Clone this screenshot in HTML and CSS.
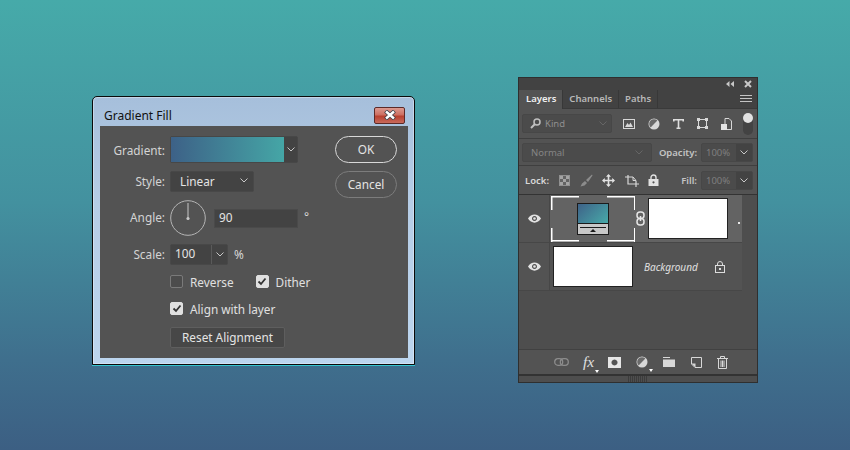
FILE: index.html
```html
<!DOCTYPE html>
<html lang="en">
<head>
    <meta charset="UTF-8">
    <title>Gradient Fill</title>
    <link rel="stylesheet" href="styles.css">
</head>
<body>
    <div class="dialog">
        <div class="dialog-title">
            <span>Gradient Fill</span>
            <div class="close-btn">
                <svg width="16" height="10" viewBox="0 0 16 10"><path d="M3.500 1 L12.500 9 M12.500 1 L3.500 9" stroke="#3a3f48" stroke-width="4"/><path d="M4 1.500 L12 8.500 M12 1.500 L4 8.500" stroke="#fff" stroke-width="2.400"/></svg>
            </div>
        </div>
        <div class="dialog-body">
            <div class="form">
                <div class="row row-gradient">
                    <label>Gradient:</label>
                    <div class="gradient-picker">
                        <div class="gradient-swatch"></div>
                        <div class="gradient-arrow"><svg class="chev" width="8" height="5" viewBox="0 0 8 5"><path d="M.5 .5 L4 4 L7.5 .5" /></svg></div>
                    </div>
                </div>
                <div class="row row-style">
                    <label>Style:</label>
                    <div class="select">Linear <svg class="chev" width="8" height="5" viewBox="0 0 8 5"><path d="M.5 .5 L4 4 L7.5 .5" /></svg></div>
                </div>
                <div class="row row-angle">
                    <label>Angle:</label>
                    <svg class="dial" width="36" height="36" viewBox="0 0 36 36">
                        <circle cx="18" cy="18" r="17.3" fill="none" stroke="#b5b5b5" stroke-width="1"/>
                        <path d="M18 3 V18" stroke="#c8c8c8" stroke-width="1"/>
                        <circle cx="18" cy="18.5" r="1.6" fill="#c8c8c8"/>
                    </svg>
                    <div class="input angle-input">90</div>
                    <span class="unit unit-deg">°</span>
                </div>
                <div class="row row-scale">
                    <label>Scale:</label>
                    <div class="combo">
                        <span class="combo-value">100</span>
                        <span class="combo-arrow"><svg class="chev" width="8" height="5" viewBox="0 0 8 5"><path d="M.5 .5 L4 4 L7.5 .5" /></svg></span>
                    </div>
                    <span class="unit unit-pct">%</span>
                </div>
                <div class="row row-checks">
                    <span class="check"><i class="box"></i>Reverse</span>
                    <span class="check check-dither"><i class="box on"><svg width="10" height="9" viewBox="0 0 10 9"><path d="M1.500 4.500 L4 7 L8.500 1.500" /></svg></i>Dither</span>
                </div>
                <div class="row row-align">
                    <span class="check"><i class="box on"><svg width="10" height="9" viewBox="0 0 10 9"><path d="M1.500 4.500 L4 7 L8.500 1.500" /></svg></i>Align with layer</span>
                </div>
                <div class="row row-reset">
                    <div class="btn-reset">Reset Alignment</div>
                </div>
            </div>
            <div class="actions">
                <div class="pill pill-ok">OK</div>
                <div class="pill">Cancel</div>
            </div>
        </div>
    </div>

    <div class="panel">
        <div class="panel-top">
            <svg width="8" height="6" viewBox="0 0 8 6"><path d="M3.500 0 V6 L0 3Z M8 0 V6 L4.500 3Z" fill="#c8c8c8"/></svg>
            <svg width="8" height="8" viewBox="0 0 8 8"><path d="M1 1 L7 7 M7 1 L1 7" stroke="#c8c8c8" stroke-width="2"/></svg>
        </div>
        <div class="tabs">
            <div class="tab active">Layers</div>
            <div class="tab">Channels</div>
            <div class="tab">Paths</div>
            <svg class="tab-menu" width="12" height="8" viewBox="0 0 12 8"><path d="M0 .5 H12 M0 3.500 H12 M0 6.500 H12" stroke="#c4c4c4"/></svg>
        </div>
        <div class="filter-row">
            <div class="kind">
                <svg width="11" height="11" viewBox="0 0 11 11"><circle cx="7" cy="4" r="3" fill="none" stroke="#c0c0c0" stroke-width="1.500"/><path d="M5 6 L1 10" stroke="#c0c0c0" stroke-width="2"/></svg>
                <span>Kind</span>
                <svg class="chev dim" width="8" height="5" viewBox="0 0 8 5"><path d="M.5 .5 L4 4 L7.5 .5" /></svg>
            </div>
            <div class="filter-icons">
                <svg width="12" height="10" viewBox="0 0 12 10"><rect x=".5" y=".5" width="11" height="9" fill="none" stroke="#d8d8d8"/><path d="M2 8 L4.500 4 L6 6 L7.500 3.500 L10 8Z" fill="#d8d8d8"/></svg>
                <svg width="12" height="12" viewBox="0 0 12 12"><circle cx="6" cy="6" r="5.500" fill="#d8d8d8"/><path d="M2.600 9.400 A4.800 4.800 0 0 1 9.400 2.600Z" fill="#6a6a6a"/></svg>
                <svg width="11" height="10" viewBox="0 0 11 10"><path d="M.8 2.500 V.8 H10.200 V2.500 M5.500 .8 V9.200 M3.500 9.200 H7.500" fill="none" stroke="#dedede" stroke-width="1.600"/></svg>
                <svg width="11" height="11" viewBox="0 0 11 11"><rect x="1.500" y="1.500" width="8" height="8" fill="none" stroke="#d8d8d8"/><path d="M0 0h3v3H0z M8 0h3v3H8z M0 8h3v3H0z M8 8h3v3H8z" fill="#d8d8d8"/></svg>
                <svg width="11" height="12" viewBox="0 0 11 12"><path d="M4 .5 H8 L10.500 3 V11.500 H6" fill="none" stroke="#d8d8d8"/><rect x="0" y="6" width="6" height="6" fill="#e4e4e4"/><path d="M4 .5 V6" stroke="#d8d8d8"/></svg>
            </div>
            <div class="toggle"><i></i></div>
        </div>
        <div class="blend-row">
            <div class="blend">Normal<svg class="chev dim" width="8" height="5" viewBox="0 0 8 5"><path d="M.5 .5 L4 4 L7.5 .5" /></svg></div>
            <span class="field-label">Opacity:</span>
            <div class="field"><span>100%</span><b><svg class="chev" width="8" height="5" viewBox="0 0 8 5"><path d="M.5 .5 L4 4 L7.5 .5" /></svg></b></div>
        </div>
        <div class="lock-row">
            <span class="lock-label">Lock:</span>
            <div class="lock-icons">
                <svg width="11" height="11" viewBox="0 0 11 11"><rect x=".5" y=".5" width="10" height="10" fill="#636363" stroke="#909090"/><path d="M1 1h3v3H1z M7 1h3v3H7z M4 4h3v3H4z M1 7h3v3H1z M7 7h3v3H7z" fill="#a4a4a4"/></svg>
                <svg width="13" height="13" viewBox="0 0 13 13"><path d="M12 .5 L6 6 L8 8 L12.500 1.500Z M5 7 L2 9.500 L.5 12.500 L4.500 11.500 L7 9Z" fill="#8c8c8c"/></svg>
                <svg width="13" height="13" viewBox="0 0 13 13"><path d="M6.500 1 V12 M1 6.500 H12" stroke="#e2e2e2" stroke-width="1.600"/><path d="M6.500 0 L9 2.800 H4Z M6.500 13 L9 10.200 H4Z M0 6.500 L2.800 4 V9Z M13 6.500 L10.200 4 V9Z" fill="#e2e2e2"/></svg>
                <svg width="14" height="13" viewBox="0 0 14 13"><path d="M3 1 V10 H14 M0 3 H8 M11 7 V13" fill="none" stroke="#d8d8d8" stroke-width="1.200"/><path d="M8 3 L11 6.500 H8Z" fill="none" stroke="#d8d8d8"/></svg>
                <svg width="11" height="12" viewBox="0 0 11 12"><path d="M3 5 V3.500 A2.500 2.500 0 0 1 8 3.500 V5" fill="none" stroke="#e2e2e2" stroke-width="1.400"/><path d="M.5 5h10v7H.5z M5.500 7.200a1.100 1.100 0 1 0 .01 0z" fill="#e2e2e2" fill-rule="evenodd"/></svg>
            </div>
            <span class="field-label">Fill:</span>
            <div class="field"><span>100%</span><b><svg class="chev" width="8" height="5" viewBox="0 0 8 5"><path d="M.5 .5 L4 4 L7.5 .5" /></svg></b></div>
        </div>
        <div class="layers">
            <div class="layers-list">
                <div class="layer layer-selected">
                    <div class="eye-cell"><svg class="eye" width="13" height="9" viewBox="0 0 13 9"><path fill-rule="evenodd" d="M0 4.500 C3 -1 10 -1 13 4.500 C10 10 3 10 0 4.500Z M6.500 2 a2.500 2.500 0 1 0 .01 0z" fill="#e2e2e2"/><circle cx="6.500" cy="4.500" r="1.300" fill="#e2e2e2"/></svg></div>
                    <div class="layer-main">
                        <div class="thumb-frame">
                            <div class="mini">
                                <div class="mini-grad"></div>
                                <div class="mini-base"><i></i><b></b></div>
                            </div>
                        </div>
                        <svg class="link" width="9" height="15" viewBox="0 0 9 15"><rect x="1" y="1" width="7" height="6.500" rx="3" fill="none" stroke="#e6e6e6" stroke-width="1.500"/><rect x="1" y="7.500" width="7" height="6.500" rx="3" fill="none" stroke="#e6e6e6" stroke-width="1.500"/><path d="M4.500 5 V10" stroke="#e6e6e6" stroke-width="1.500"/></svg>
                        <div class="mask"></div>
                        <i class="dot"></i>
                    </div>
                </div>
                <div class="layer">
                    <div class="eye-cell"><svg class="eye" width="13" height="9" viewBox="0 0 13 9"><path fill-rule="evenodd" d="M0 4.500 C3 -1 10 -1 13 4.500 C10 10 3 10 0 4.500Z M6.500 2 a2.500 2.500 0 1 0 .01 0z" fill="#e2e2e2"/><circle cx="6.500" cy="4.500" r="1.300" fill="#e2e2e2"/></svg></div>
                    <div class="layer-main layer-bg">
                        <div class="bg-thumb"></div>
                        <span class="bg-name">Background</span>
                        <svg width="10" height="12" viewBox="0 0 10 12"><path d="M2.500 5 V3 A2.500 2.500 0 0 1 7.500 3 V5" fill="none" stroke="#dcdcdc"/><rect x=".5" y="4.500" width="9" height="7" fill="none" stroke="#dcdcdc"/><rect x="4" y="7" width="2" height="2" fill="#dcdcdc"/></svg>
                    </div>
                </div>
            </div>
        </div>
        <div class="panel-foot">
            <svg width="15" height="8" viewBox="0 0 15 8"><rect x=".7" y=".7" width="8" height="6.600" rx="3.300" fill="none" stroke="#8c8c8c" stroke-width="1.300"/><rect x="6.300" y=".7" width="8" height="6.600" rx="3.300" fill="none" stroke="#8c8c8c" stroke-width="1.300"/></svg>
            <span class="fx">fx<i class="tick"></i></span>
            <svg width="13" height="11" viewBox="0 0 13 11"><path fill-rule="evenodd" d="M0 0H13V11H0Z M6.500 2.500a3 3 0 1 0 .01 0z" fill="#e6e6e6"/></svg>
            <span class="adj"><svg width="12" height="12" viewBox="0 0 12 12"><circle cx="6" cy="6" r="5.500" fill="#d8d8d8"/><path d="M2.600 9.400 A4.800 4.800 0 0 1 9.400 2.600Z" fill="#6a6a6a"/></svg><i class="tick"></i></span>
            <svg width="12" height="10" viewBox="0 0 12 10"><path d="M0 0H7V1H0Z M0 2.500H12V10H0Z" fill="#d8d8d8"/></svg>
            <svg class="foot-new" width="11" height="11" viewBox="0 0 11 11"><path d="M.5 .5 H10.500 V10.500 H4 L.5 7Z" fill="none" stroke="#d8d8d8"/><path d="M.5 6.500 H4.500 V10.500Z" fill="#d8d8d8"/></svg>
            <svg class="foot-trash" width="11" height="13" viewBox="0 0 11 13"><path d="M0 2.500 H11 M3.500 2 V.5 H7.500 V2 M1.500 2.500 V12.500 H9.500 V2.500 M4 4.500 V11 M5.500 4.500 V11 M7 4.500 V11" fill="none" stroke="#d8d8d8"/></svg>
        </div>
        <div class="panel-grip"><i></i></div>
    </div>
</body>
</html>
```

FILE: styles.css
```css
html, body {
    margin: 0;
    padding: 0;
}
body {
    width: 850px;
    height: 450px;
    overflow: hidden;
    position: relative;
    font-family: "Noto Sans", sans-serif;
    font-size: 11.8px;
    color: #e2e2e2;
    background: linear-gradient(180deg, #46aaa9 0%, #43919f 45%, #3f6f8d 80%, #3c5f83 100%);
}
.chev {
    fill: none;
    stroke: #c8c8c8;
    stroke-width: 1;
}
.chev.dim {
    stroke: #666;
}

/* dialog */
.dialog {
    position: absolute;
    left: 92px;
    top: 96px;
    width: 323px;
    height: 269px;
    box-sizing: border-box;
    border: 1px solid #0a0a0a;
    border-radius: 5px 5px 0 0;
    background: linear-gradient(180deg, #a6bfdb 0%, #b6cde6 40%, #bcd5ee 100%);
    box-shadow: inset 0 0 0 1px rgba(255, 255, 255, .35), 0 1px 0 #35c4d0;
    padding: 0 6px 6px 7px;
    display: flex;
    flex-direction: column;
}
.dialog-title {
    height: 29px;
    flex: none;
    display: flex;
    align-items: center;
    justify-content: space-between;
    color: #111;
    padding: 0 3px 0 4px;
    font-size: 12px;
}
.dialog-title span {
    position: relative;
    top: 4px;
}
.close-btn {
    width: 31px;
    height: 17px;
    margin-top: 7px;
    border: 1px solid #5c2a28;
    border-radius: 2px;
    box-sizing: border-box;
    background: linear-gradient(180deg, #dc9a90 0%, #cd6f62 45%, #b8402f 55%, #c76a5c 100%);
    display: flex;
    align-items: center;
    justify-content: center;
}
.dialog-body {
    flex: 1;
    background: #535353;
    display: flex;
    justify-content: space-between;
    padding: 10px 11px 0 0;
}
.form {
    display: flex;
    flex-direction: column;
}
.row {
    display: flex;
    align-items: center;
}
.row label {
    width: 65px;
    margin-right: 5px;
    text-align: right;
    color: #d4d4d4;
}
.row-style label, .row-angle label, .row-scale label {
    padding-bottom: 2px;
}
.row-gradient {
    height: 27px;
}
.gradient-picker {
    width: 128px;
    height: 27px;
    display: flex;
    box-sizing: border-box;
    border: 1px solid #474747;
    border-radius: 2px;
    background: #434343;
}
.gradient-swatch {
    width: 113px;
    background: linear-gradient(90deg, #3d6187, #45a6a6);
}
.gradient-arrow {
    flex: 1;
    display: flex;
    align-items: center;
    justify-content: center;
}
.row-style {
    height: 21px;
    margin-top: 8px;
}
.select {
    width: 84px;
    height: 21px;
    box-sizing: border-box;
    padding: 0 5px 2px 9px;
    border: 1px solid #484848;
    border-radius: 2px;
    background: #434343;
    display: flex;
    align-items: center;
    justify-content: space-between;
    color: #e4e4e4;
}
.row-angle {
    height: 36px;
    margin-top: 8px;
}
.dial {
    flex: none;
}
.input {
    margin-left: 8px;
    width: 84px;
    height: 19px;
    box-sizing: border-box;
    background: #434343;
    border: 1px solid #4a4a4a;
    padding-left: 4px;
    line-height: 14px;
    color: #e4e4e4;
}
.unit {
    margin-left: 6px;
    color: #d8d8d8;
}
.unit-deg {
    position: relative;
    top: -2px;
}
.unit-pct {
    padding-bottom: 2px;
}
.row-scale {
    height: 21px;
    margin-top: 8px;
}
.combo {
    width: 58px;
    height: 21px;
    box-sizing: border-box;
    display: flex;
    border: 1px solid #484848;
    border-radius: 2px;
    background: #434343;
}
.combo-value {
    width: 41px;
    padding-left: 4px;
    box-sizing: border-box;
    line-height: 16px;
    border-right: 1px solid #5a5a5a;
    color: #e4e4e4;
}
.combo-arrow {
    flex: 1;
    display: flex;
    align-items: center;
    justify-content: center;
}
.row-checks {
    height: 17px;
    margin-top: 8px;
    padding-left: 70px;
}
.row-align {
    height: 17px;
    margin-top: 10px;
    padding-left: 70px;
}
.check {
    display: flex;
    align-items: center;
    color: #e0e0e0;
    white-space: nowrap;
}
.check-dither {
    margin-left: 22px;
}
.box {
    width: 13px;
    height: 13px;
    margin-right: 7px;
    box-sizing: border-box;
    border: 1px solid #7a7a7a;
    border-radius: 2px;
    background: #4c4c4c;
    display: flex;
    align-items: center;
    justify-content: center;
}
.box.on {
    background: #e0e0e0;
    border-color: #e0e0e0;
}
.box svg {
    fill: none;
    stroke: #333;
    stroke-width: 1.800;
}
.row-reset {
    margin-top: 10px;
    padding-left: 70px;
}
.btn-reset {
    width: 115px;
    height: 21px;
    box-sizing: border-box;
    border: 1px solid #5e5e5e;
    border-radius: 2px;
    background: #474747;
    text-align: center;
    line-height: 19px;
    color: #e4e4e4;
}
.actions {
    display: flex;
    flex-direction: column;
    gap: 8px;
}
.pill {
    width: 62px;
    height: 27px;
    box-sizing: border-box;
    border: 1px solid #7c7c7c;
    border-radius: 14px;
    text-align: center;
    line-height: 25px;
    color: #e4e4e4;
}
.pill-ok {
    border-color: #d8d8d8;
}

/* layers panel */
.panel {
    position: absolute;
    left: 518px;
    top: 77px;
    width: 240px;
    height: 306px;
    box-sizing: border-box;
    border: 1px solid #2f2f2f;
    background: #535353;
    display: flex;
    flex-direction: column;
    font-size: 9.500px;
    font-weight: 600;
}
.panel-top {
    height: 12px;
    flex: none;
    background: #424242;
    display: flex;
    align-items: center;
    justify-content: flex-end;
    gap: 10px;
    padding-right: 5px;
}
.tabs {
    height: 19px;
    box-sizing: border-box;
    flex: none;
    background: #424242;
    display: flex;
    position: relative;
    border-bottom: 1px solid #3a3a3a;
}
.tab {
    padding: 0 6px;
    line-height: 18px;
    color: #b8b8b8;
    border-right: 1px solid #383838;
}
.tab.active {
    padding-left: 7px;
    background: #535353;
    color: #f0f0f0;
    height: 19px;
}
.tab-menu {
    position: absolute;
    right: 5px;
    top: 5px;
}
.filter-row {
    height: 30px;
    flex: none;
    display: flex;
    align-items: center;
    padding: 0 3px;
    border-bottom: 1px solid #3f3f3f;
    box-sizing: border-box;
}
.kind {
    width: 90px;
    height: 19px;
    box-sizing: border-box;
    border: 1px solid #474747;
    border-radius: 2px;
    background: #4b4b4b;
    display: flex;
    align-items: center;
    padding: 0 4px 0 7px;
    gap: 4px;
    color: #8f8f8f;
    font-weight: 400;
}
.kind .chev {
    margin-left: auto;
}
.filter-icons {
    display: flex;
    align-items: center;
    gap: 13px;
    margin-left: 11px;
}
.toggle {
    margin-left: 11px;
    width: 10px;
    height: 22px;
    border-radius: 5px;
    background: #434343;
}
.toggle i {
    display: block;
    width: 10px;
    height: 10px;
    border-radius: 5px;
    background: #e2e2e2;
}
.blend-row, .lock-row {
    flex: none;
    display: flex;
    align-items: center;
    box-sizing: border-box;
    border-bottom: 1px solid #3f3f3f;
    padding: 0 4px 0 3px;
}
.blend-row {
    height: 27px;
}
.lock-row {
    height: 29px;
    border-bottom-color: #333;
}
.blend {
    width: 130px;
    height: 19px;
    box-sizing: border-box;
    border: 1px solid #474747;
    border-radius: 2px;
    background: #4b4b4b;
    display: flex;
    align-items: center;
    justify-content: space-between;
    padding: 0 8px 0 8px;
    color: #858585;
    font-weight: 400;
}
.field-label {
    margin-left: auto;
    color: #c4c4c4;
}
.field {
    width: 52px;
    height: 19px;
    margin-left: 4px;
    box-sizing: border-box;
    border: 1px solid #474747;
    border-radius: 2px;
    display: flex;
    color: #7f7f7f;
    font-weight: 400;
    background: #4b4b4b;
}
.field span {
    flex: 1;
    padding-left: 4px;
    line-height: 17px;
}
.field b {
    width: 16px;
    background: #434343;
    display: flex;
    align-items: center;
    justify-content: center;
}
.lock-label {
    margin-left: 3px;
    color: #d8d8d8;
}
.lock-icons {
    display: flex;
    align-items: center;
    gap: 9.500px;
    margin-left: 10px;
}
.layers {
    flex: 1;
    display: flex;
    background: #4e4e4e;
    padding-right: 15px;
}
.layers-list {
    flex: 1;
}
.layer {
    height: 48px;
    display: flex;
    border-bottom: 1px solid #474747;
    box-sizing: border-box;
}
.eye-cell {
    width: 31px;
    flex: none;
    display: flex;
    align-items: center;
    justify-content: center;
    border-right: 1px solid #474747;
    box-sizing: border-box;
    background: #535353;
}
.layer-main {
    flex: 1;
    display: flex;
    align-items: center;
    background: #535353;
}
.layer-selected .layer-main {
    background: #636363;
    padding-left: 1px;
}
.thumb-frame {
    width: 84px;
    height: 46px;
    box-sizing: border-box;
    display: flex;
    align-items: center;
    justify-content: center;
    background:
        linear-gradient(#fff, #fff) left top / 28px 1.500px no-repeat,
        linear-gradient(#fff, #fff) right top / 28px 1.500px no-repeat,
        linear-gradient(#fff, #fff) left bottom / 28px 1.500px no-repeat,
        linear-gradient(#fff, #fff) right bottom / 28px 1.500px no-repeat,
        linear-gradient(#fff, #fff) left top / 1.500px 14px no-repeat,
        linear-gradient(#fff, #fff) right top / 1.500px 14px no-repeat,
        linear-gradient(#fff, #fff) left bottom / 1.500px 14px no-repeat,
        linear-gradient(#fff, #fff) right bottom / 1.500px 14px no-repeat;
}
.mini {
    width: 32px;
    height: 32px;
    box-sizing: border-box;
    border: 1px solid #1b1b1b;
    display: flex;
    flex-direction: column;
}
.mini-grad {
    flex: 1;
    background: linear-gradient(135deg, #3e6288, #48aaa9);
}
.mini-base {
    height: 10px;
    background: #c8c8c8;
    border-top: 1px solid #1b1b1b;
    position: relative;
}
.mini-base i {
    position: absolute;
    left: 2px;
    right: 2px;
    top: 3px;
    height: 1px;
    background: #1b1b1b;
}
.mini-base b {
    position: absolute;
    left: 12px;
    top: 5px;
    width: 0;
    height: 0;
    border-left: 3px solid transparent;
    border-right: 3px solid transparent;
    border-bottom: 3px solid #1b1b1b;
}
.link {
    margin-left: 1px;
    flex: none;
}
.mask {
    width: 80px;
    height: 41px;
    margin-left: 3px;
    box-sizing: border-box;
    background: #fff;
    border: 1px solid #222;
}
.dot {
    width: 2px;
    height: 2px;
    margin-left: 10px;
    margin-top: 8px;
    background: #e8e8e8;
}
.layer-bg {
    padding-left: 3px;
}
.bg-thumb {
    width: 80px;
    height: 41px;
    box-sizing: border-box;
    background: #fff;
    border: 1px solid #222;
}
.bg-name {
    margin-left: 11px;
    width: 71px;
    font-size: 10px;
    font-style: italic;
    font-weight: 400;
    color: #e0e0e0;
}
.panel-foot {
    height: 25px;
    flex: none;
    box-sizing: border-box;
    border-top: 1px solid #414141;
    display: flex;
    align-items: center;
    padding-left: 35px;
    gap: 14px;
}
.fx {
    position: relative;
    font-family: "Liberation Serif", serif;
    font-style: italic;
    font-size: 15.500px;
    line-height: 14px;
    font-weight: 400;
    color: #e0e0e0;
}
.adj {
    position: relative;
    display: flex;
    margin: 0 1px;
}
.tick {
    position: absolute;
    right: -5px;
    bottom: -4px;
    width: 0;
    height: 0;
    border-left: 2px solid transparent;
    border-right: 2px solid transparent;
    border-top: 3px solid #fff;
}
.foot-new {
    margin-left: 2px;
}
.foot-trash {
    margin-left: 1px;
}
.panel-grip {
    height: 6px;
    flex: none;
    border-top: 2px solid #333;
    background: #4e4e4e;
    display: flex;
    justify-content: center;
}
.panel-grip i {
    width: 20px;
    background: repeating-linear-gradient(90deg, #3c3c3c 0 1px, transparent 1px 2px);
}
```
